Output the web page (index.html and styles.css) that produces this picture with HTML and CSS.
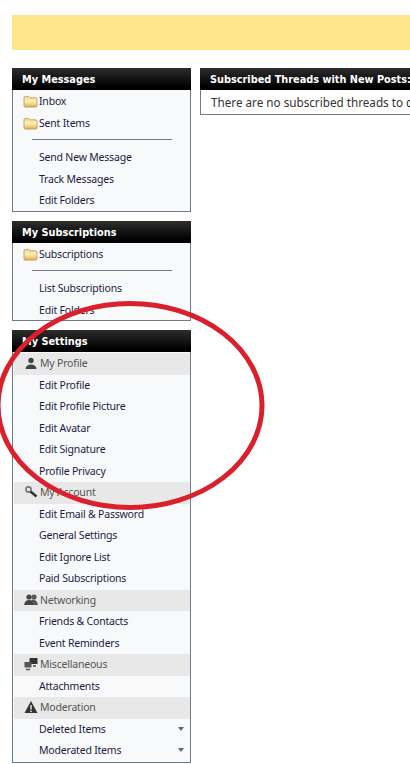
FILE: index.html
```html
<!DOCTYPE html>
<html lang="en">
<head>
<meta charset="utf-8">
<title>User Control Panel</title>
<link rel="stylesheet" href="styles.css">
</head>
<body>
<svg width="0" height="0" class="defs">
  <defs>
    <linearGradient id="fold" x1="0" y1="0" x2="0" y2="1">
      <stop offset="0" stop-color="#f0d58a"/><stop offset=".45" stop-color="#fdf0b4"/><stop offset="1" stop-color="#e2b04e"/>
    </linearGradient>
    <symbol id="folder" viewBox="0 0 16 14">
      <path d="M1 3 Q1 1.5 2.5 1.5 H6 L7.5 3 H13.5 Q15 3 15 4.5 V11.5 Q15 13 13.5 13 H2.5 Q1 13 1 11.5 Z" fill="url(#fold)" stroke="#b59a5e" stroke-width=".9"/>
    </symbol>
  </defs>
</svg>
<div class="banner"></div>
<div class="layout">
  <aside class="sidebar">
    <section class="panel">
      <h2 class="head">My Messages</h2>
      <div class="body">
        <a class="row"><svg class="folder"><use href="#folder"/></svg>Inbox</a>
        <a class="row"><svg class="folder"><use href="#folder"/></svg>Sent Items</a>
        <hr class="rule">
        <a class="row">Send New Message</a>
        <a class="row">Track Messages</a>
        <a class="row">Edit Folders</a>
      </div>
    </section>
    <section class="panel">
      <h2 class="head">My Subscriptions</h2>
      <div class="body">
        <a class="row"><svg class="folder"><use href="#folder"/></svg>Subscriptions</a>
        <hr class="rule">
        <a class="row">List Subscriptions</a>
        <a class="row">Edit Folders</a>
      </div>
    </section>
    <section class="panel">
      <h2 class="head">My Settings</h2>
      <div class="body">
        <div class="group"><svg class="gicon" viewBox="0 0 14 14"><circle cx="7" cy="4.5" r="2.7" fill="#444"/><path d="M1.5 13 Q2 8.5 7 8.5 Q12 8.5 12.5 13 Z" fill="#444"/></svg>My Profile</div>
        <a class="row">Edit Profile</a>
        <a class="row">Edit Profile Picture</a>
        <a class="row">Edit Avatar</a>
        <a class="row">Edit Signature</a>
        <a class="row">Profile Privacy</a>
        <div class="group"><svg class="gicon" viewBox="0 0 14 14"><circle cx="4.5" cy="4.5" r="2.6" fill="none" stroke="#777" stroke-width="1.6"/><path d="M6.5 6.5 L12.5 11.5" stroke="#333" stroke-width="2.4"/></svg>My Account</div>
        <a class="row">Edit Email &amp; Password</a>
        <a class="row">General Settings</a>
        <a class="row">Edit Ignore List</a>
        <a class="row">Paid Subscriptions</a>
        <div class="group"><svg class="gicon" viewBox="0 0 14 14"><circle cx="5" cy="4" r="2.6" fill="#444"/><circle cx="10" cy="4" r="2.6" fill="#555"/><path d="M0 12 Q1 7 5 7 Q9 7 10 12 Z" fill="#444"/><path d="M7 7 Q13 6 14 12 H10 Z" fill="#555"/></svg>Networking</div>
        <a class="row">Friends &amp; Contacts</a>
        <a class="row">Event Reminders</a>
        <div class="group"><svg class="gicon" viewBox="0 0 14 14"><rect x="5.5" y="1" width="8" height="6" fill="#333"/><rect x="0.5" y="5" width="7" height="5.5" fill="#555"/><path d="M2 12.5 H6 M9 9 H12" stroke="#555" stroke-width="1.5"/></svg>Miscellaneous</div>
        <a class="row">Attachments</a>
        <div class="group"><svg class="gicon" viewBox="0 0 14 14"><path d="M7 1 L13.5 13 H.5 Z" fill="#333"/><path d="M7 5 V9.5 M7 10.5 V12" stroke="#eee" stroke-width="1.4"/></svg>Moderation</div>
        <a class="row row-more">Deleted Items<span class="caret"></span></a>
        <a class="row row-more">Moderated Items<span class="caret"></span></a>
      </div>
    </section>
  </aside>
  <main class="content">
    <section class="panel">
      <h2 class="head">Subscribed Threads with New Posts: 0</h2>
      <p class="empty">There are no subscribed threads to display.</p>
    </section>
  </main>
</div>
<svg class="circle" viewBox="0 0 410 764" width="410" height="764">
  <ellipse cx="130" cy="405.5" rx="132" ry="102" fill="none" stroke="#d9202c" stroke-width="5"/>
</svg>
</body>
</html>
```
FILE: styles.css
```css
html, body {
  margin: 0;
  height: 764px;
  overflow: hidden;
  background: #fff;
}
body {
  position: relative;
  padding: 15px 0 0 12px;
  box-sizing: border-box;
  font-family: "Noto Sans", Tahoma, sans-serif;
  font-size: 10.5px;
  letter-spacing: -0.2px;
  color: #1b1b3f;
}
.defs { position: absolute; }
.banner {
  height: 35px;
  background: #fee68c;
  margin-bottom: 18px;
}
.layout {
  display: flex;
  gap: 9px;
  align-items: flex-start;
}
.sidebar {
  flex: 0 0 179px;
  display: flex;
  flex-direction: column;
  gap: 9px;
}
.content { flex: 0 0 400px; }
.panel {
  border: 1px solid #6f7d8a;
  border-top: 0;
  background: #f8f9fb;
}
.content .panel { background: #fff; }
.head {
  margin: 0 -1px;
  height: 22px;
  line-height: 24px;
  padding-left: 10px;
  font-family: "DejaVu Sans", sans-serif;
  font-size: 9.75px;
  letter-spacing: 0;
  font-weight: bold;
  color: #fff;
  background: linear-gradient(#2e2e2e, #000 85%);
  white-space: nowrap;
  overflow: hidden;
}
.body { padding: 1px 0 0 1px; }
.sidebar .panel:not(:last-child) .body { margin-bottom: -1px; }
.row {
  display: flex;
  align-items: center;
  box-sizing: border-box;
  height: 21.5px;
  padding: 0 0 1px 25px;
  position: relative;
  white-space: nowrap;
}
.folder {
  position: absolute;
  left: 9px;
  top: 4px;
  width: 15px;
  height: 13px;
}
.rule {
  margin: 5px 18px 7px 18px;
  border: 0;
  border-top: 1px solid #6f7d8a;
}
.group {
  display: flex;
  align-items: center;
  box-sizing: border-box;
  height: 21.5px;
  padding: 0 0 1px 10px;
  background: #e8e8e8;
  color: #555;
  white-space: nowrap;
}
.gicon {
  width: 14px;
  height: 14px;
  margin-right: 2px;
  flex: none;
}
.row-more { padding-right: 6px; justify-content: space-between; }
.caret {
  width: 0;
  height: 0;
  border: 3.5px solid transparent;
  border-top: 4px solid #666;
  border-bottom: 0;
}
.empty {
  margin: 0;
  height: 24px;
  line-height: 24px;
  padding-left: 10px;
  font-size: 11.7px;
  letter-spacing: 0;
  color: #333;
  white-space: nowrap;
}
.circle {
  position: absolute;
  left: 0;
  top: 0;
  pointer-events: none;
}
```
